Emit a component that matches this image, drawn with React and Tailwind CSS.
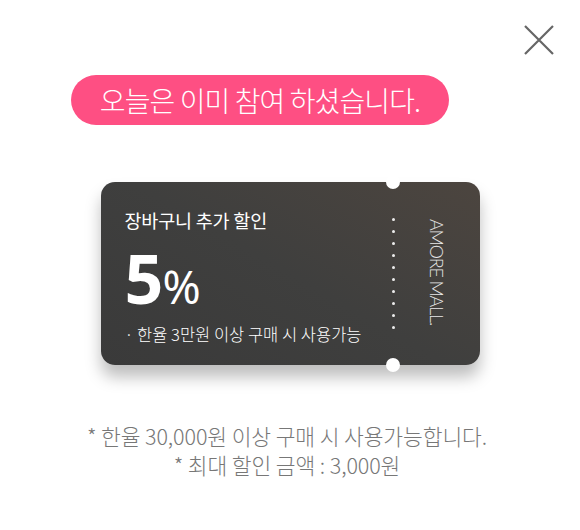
import React from "react";

const KR = { fontFamily: '"Noto Sans CJK KR", "Noto Sans", sans-serif' };

function CloseIcon() {
  return (
    <svg width="30" height="30" viewBox="0 0 30 30" fill="none">
      <path d="M1 1L29 29M29 1L1 29" stroke="#666" strokeWidth="2.2" />
    </svg>
  );
}

function Ticket() {
  const dots = Array.from({ length: 10 });
  return (
    <div className="relative mx-auto flex h-[183px] w-[379px] rounded-[14px] bg-[linear-gradient(30deg,#3a3a3a_0%,#3f3f3e_50%,#4c453f_100%)] shadow-[0_12px_16px_rgba(0,0,0,0.26)]">
      <div className="flex w-[292px] flex-col pl-[24px] pt-[26px] text-white" style={KR}>
        <p className="text-[18.5px] leading-[24px] font-normal tracking-[-0.2px]">장바구니 추가 할인</p>
        <p className="mt-[12px] flex items-baseline leading-none" style={{ fontFamily: '"Noto Sans", sans-serif' }}>
          <span className="text-[68px] font-bold tracking-[-1px]">5</span>
          <span className="text-[46px] font-normal">%</span>
        </p>
        <p className="mt-[11px] text-[16.5px] leading-[22px] font-light">· 한율 3만원 이상 구매 시 사용가능</p>
      </div>
      <div className="flex w-[2px] flex-col items-center justify-center gap-[9.5px]">
        {dots.map((_, i) => (
          <span key={i} className="h-[2.5px] w-[2.5px] shrink-0 rounded-full bg-white/90" />
        ))}
      </div>
      <div className="flex flex-1 items-center justify-center pb-[2px]">
        <span
          className="text-[18px] font-light leading-none tracking-[-1.2px] text-[#e8e8e8] [writing-mode:vertical-rl]"
          style={{ fontFamily: 'Lato, "Noto Sans", sans-serif' }}
        >
          AMORE MALL.
        </span>
      </div>
      <span className="absolute left-[285px] top-[-7px] h-[14px] w-[14px] rounded-full bg-white" />
      <span className="absolute bottom-[-7px] left-[285px] h-[14px] w-[14px] rounded-full bg-white" />
    </div>
  );
}

export default function App() {
  return (
    <div className="min-h-screen bg-white">
      <div className="relative flex h-[530px] w-[580px] flex-col rounded-[20px] bg-white">
        <button className="absolute right-[26px] top-[25px]">
          <CloseIcon />
        </button>

        <div
          className="ml-[71px] mt-[75px] flex h-[50px] w-[378px] items-center justify-center rounded-full bg-[#fe4f83] text-[28px] font-light tracking-[-0.9px] text-white"
          style={KR}
        >
          오늘은 이미 참여 하셨습니다.
        </div>

        <div className="mt-[57px]">
          <Ticket />
        </div>

        <div className="mt-[57px] flex flex-col gap-[1px] pr-[6px] text-center text-[21.5px] leading-[28px] font-light tracking-[-0.1px] text-[#777]" style={KR}>
          <p>* 한율 30,000원 이상 구매 시 사용가능합니다.</p>
          <p>* 최대 할인 금액 : 3,000원</p>
        </div>
      </div>
    </div>
  );
}
